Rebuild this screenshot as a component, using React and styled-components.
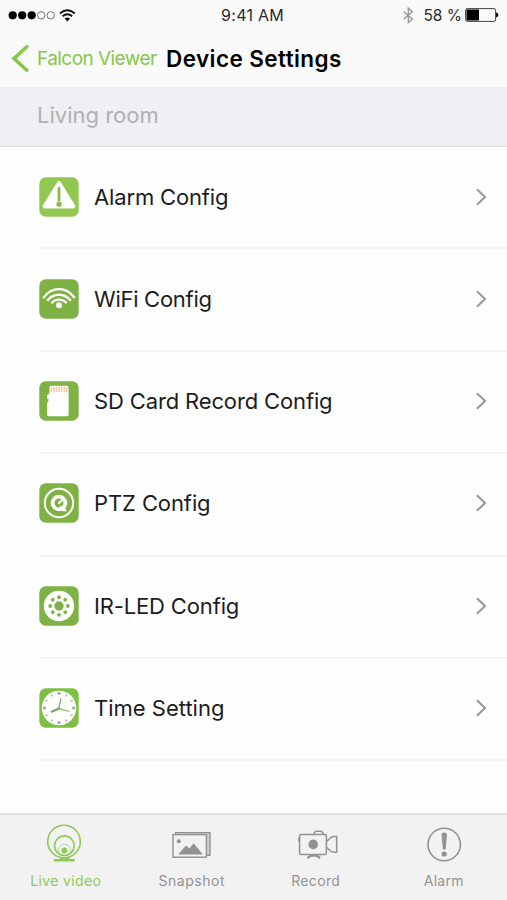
import styled, { createGlobalStyle } from "styled-components";

const GlobalStyles = createGlobalStyle`
  * {
    box-sizing: border-box;
  }

  body {
    margin: 0;
    background: #fefefe;
    font-family: Inter, "Liberation Sans", sans-serif;
  }

  svg {
    display: block;
    flex-shrink: 0;
  }
`;

const Screen = styled.div`
  width: 100%;
  height: 100vh;
  display: flex;
  flex-direction: column;
  overflow: hidden;
`;

const StatusBar = styled.div`
  height: 30px;
  display: grid;
  grid-template-columns: 1fr auto 1fr;
  align-items: center;
  padding: 0 8px 0 8px;
  background: #fafafa;
  color: #2b2b2b;
  font-size: 16px;
`;

const StatusLeft = styled.div`
  display: flex;
  align-items: center;
  gap: 3px;
`;

const StatusTime = styled.div`
  padding-right: 2px;
  letter-spacing: 0.25px;
`;

const StatusRight = styled.div`
  display: flex;
  align-items: center;
  justify-content: flex-end;
`;

const BatteryText = styled.span`
  margin: 0 3px 0 9px;
  font-size: 15.5px;
  white-space: nowrap;
`;

const NavBar = styled.div`
  height: 57px;
  display: flex;
  align-items: center;
  padding-left: 11px;
  background: #fafafa;
  white-space: nowrap;
`;

const BackText = styled.div`
  width: 128px;
  padding-left: 7px;
  color: #86c64c;
  font-size: 19px;
  letter-spacing: -0.55px;
`;

const NavTitle = styled.div`
  padding-left: 8px;
  color: #000;
  font-size: 22.5px;
  font-weight: 600;
  letter-spacing: 0.42px;
`;

const SectionHeader = styled.div`
  height: 60px;
  display: flex;
  align-items: center;
  padding: 0 0 3px 37px;
  background: #efeff4;
  border-bottom: 1px solid #dcdce0;
  color: #b0b0b3;
  font-size: 22px;
`;

const List = styled.div`
  flex: 1;
  padding-left: 39px;
`;

const Row = styled.div`
  height: 102.4px;
  display: flex;
  align-items: center;
  padding: 0 20px 2px 0;
  border-bottom: 2px solid #f3f3f3;

  &:first-child {
    padding-bottom: 0;
  }
`;

const RowText = styled.div`
  flex: 1;
  padding-left: 15px;
  color: #1c1c1c;
  font-size: 22px;
  letter-spacing: ${(props) => props.$spacing}px;
`;

const TabBar = styled.div`
  height: 87px;
  display: grid;
  grid-template-columns: repeat(4, 1fr);
  padding-left: 1px;
  background: #f2f2f2;
  border-top: 2px solid #e3e3e3;
`;

const Tab = styled.div`
  display: flex;
  flex-direction: column;
  align-items: center;
  padding-top: 8px;
  color: ${(props) => (props.$active ? "#8fca56" : "#929292")};
`;

const TabText = styled.div`
  margin-top: 5px;
  padding-left: ${(props) => props.$left || 0}px;
  padding-right: ${(props) => props.$right || 0}px;
  font-size: 14px;
  line-height: 18px;
  letter-spacing: ${(props) => props.$spacing}px;
  white-space: nowrap;
`;

function Signal() {
  return (
    <svg width="48" height="10" viewBox="0 0 48 10">
      {[4.7, 14.2, 23.7].map((x) => (
        <circle key={x} cx={x} cy="5.3" r="4.1" fill="#000" />
      ))}
      {[33.2, 42.7].map((x) => (
        <circle key={x} cx={x} cy="5.3" r="3.7" fill="none" stroke="#555" strokeWidth="0.8" />
      ))}
    </svg>
  );
}

function StatusWifi() {
  return (
    <svg width="17" height="13" viewBox="0 0 17 13">
      <g fill="none" stroke="#111" strokeWidth="2">
        <path d="M1 4.4Q8.3-1.8 15.8 4.4" />
        <path d="M3.6 7.2Q8.3 3.2 13.2 7.2" />
      </g>
      <path d="M5.6 9.5Q8.3 7.6 11.1 9.5L8.4 12.5Z" fill="#111" />
    </svg>
  );
}

function Bluetooth() {
  return (
    <svg width="12" height="17" viewBox="0 0 12 17">
      <path
        d="M1.5 4.5L10.3 12 6.3 15.6V1.2L10.3 4.8 1.5 12.3"
        fill="none"
        stroke="#999"
        strokeWidth="1.4"
      />
    </svg>
  );
}

function Battery() {
  return (
    <svg width="34" height="14" viewBox="0 0 34 14">
      <rect x="0.6" y="0.6" width="30" height="12.8" rx="1.5" fill="none" stroke="#444" />
      <rect x="1.5" y="1.5" width="12.5" height="11" fill="#000" />
      <path d="M31 4.6Q33.5 5 33.5 7T31 9.4Z" fill="#111" />
    </svg>
  );
}

function BackArrow() {
  return (
    <svg width="19" height="29" viewBox="0 0 19 29">
      <path d="M16.9 1.7L3 14.6 16.9 27.3" fill="none" stroke="#86c64c" strokeWidth="3.5" />
    </svg>
  );
}

function Chevron() {
  return (
    <svg width="12" height="18" viewBox="0 0 12 18">
      <path d="M1.9 1.2L10 9 1.9 16.8" fill="none" stroke="#999" strokeWidth="2.1" />
    </svg>
  );
}

function RowIcon({ color, children }) {
  return (
    <svg width="40" height="40" viewBox="0 0 40 40">
      <rect x="0.3" y="0.3" width="39.4" height="39.4" rx="6.5" fill={color} />
      {children}
    </svg>
  );
}

const alarmIcon = (
  <RowIcon color="#92c84f">
    <path
      d="M20 6L34.4 29.4H5.6Z"
      fill="#fff"
      stroke="#fff"
      strokeWidth="4"
      strokeLinejoin="round"
    />
    <path d="M20 11.4V23" stroke="#86ba4a" strokeWidth="2.8" strokeLinecap="round" />
    <circle cx="20" cy="27.2" r="2.6" fill="#86ba4a" />
  </RowIcon>
);

const wifiIcon = (
  <RowIcon color="#7eb245">
    <g fill="none" stroke="#fff" strokeWidth="2.4">
      <path d="M4.2 19C13 7.2 27 7.2 35.8 19" />
      <path d="M8.2 21.8C14.6 13.8 25.4 13.8 31.8 21.8" />
      <path d="M12.4 24.2C16.4 19.4 23.6 19.4 27.6 24.2" />
    </g>
    <circle cx="20" cy="26.2" r="3" fill="#fff" />
  </RowIcon>
);

const sdCardIcon = (
  <RowIcon color="#7eb245">
    <path
      d="M12 4.8H28Q29.6 4.8 29.6 6.5V33.5Q29.6 35.2 28 35.2H9.8Q8 35.2 8 33.5V22.5Q8 21 9.5 20.2V18H8V14.5L10.5 12.3V6.2Q10.5 4.8 12 4.8Z"
      fill="#fff"
    />
    <g fill="#f5d0a8">
      {[11.5, 14.1, 16.7, 19.3, 21.9, 24.5, 27.1].map((x) => (
        <rect key={x} x={x} y="5.6" width="1.7" height="5.6" />
      ))}
    </g>
  </RowIcon>
);

const ptzIcon = (
  <RowIcon color="#7eb245">
    <circle cx="20" cy="20" r="14.2" fill="none" stroke="#fff" strokeWidth="2" />
    <circle cx="20" cy="20" r="6.4" fill="none" stroke="#fff" strokeWidth="3.8" />
    <path d="M20.8 22.5L25.5 24 27.6 28.2H23.2Z" fill="#fff" />
    <path d="M19.4 20.8L23.4 16.6" stroke="#fff" strokeWidth="2" />
  </RowIcon>
);

const irLedIcon = (
  <RowIcon color="#7eb245">
    <circle cx="20" cy="20" r="15.2" fill="#fff" />
    <circle cx="20" cy="20" r="4.7" fill="#7eb245" />
    {[0, 45, 90, 135, 180, 225, 270, 315].map((angle) => (
      <circle
        key={angle}
        cx="20"
        cy="11.2"
        r="1.9"
        fill="#7eb245"
        transform={`rotate(${angle} 20 20)`}
      />
    ))}
  </RowIcon>
);

const clockIcon = (
  <RowIcon color="#7fc043">
    <circle cx="20" cy="20" r="17.2" fill="#fdfefc" />
    {[0, 30, 60, 90, 120, 150, 180, 210, 240, 270, 300, 330].map((angle) => (
      <path
        key={angle}
        d="M20 4.2V6.6"
        stroke={angle % 90 === 0 ? "#8f9b8a" : "#b4beae"}
        strokeWidth={angle % 90 === 0 ? 2.6 : 1.6}
        transform={`rotate(${angle} 20 20)`}
      />
    ))}
    <path d="M19.5 21.5L22 10.5" stroke="#8fae7c" strokeWidth="1.3" />
    <path d="M20 20.5L12 24" stroke="#7aa065" strokeWidth="2" />
    <path d="M19 20.3L30.5 23.5" stroke="#8fae7c" strokeWidth="1.2" />
    <circle cx="20" cy="20.7" r="1.4" fill="#7fc043" />
  </RowIcon>
);

function LiveVideoIcon() {
  return (
    <svg width="42" height="44" viewBox="0 0 42 44">
      <g fill="none" stroke="currentColor" strokeWidth="1.6">
        <circle cx="21" cy="18.5" r="16.3" />
        <circle cx="21.4" cy="22.7" r="9.8" />
        <path d="M16.5 31A6.2 6.2 0 1 1 26.5 31" strokeWidth="0.9" opacity="0.6" />
      </g>
      <circle cx="21.4" cy="27.5" r="2.9" fill="currentColor" />
      <path d="M15 33.8Q21 35.5 28 33.8L25 36.2H18Z" fill="currentColor" />
      <rect x="10.6" y="36" width="21.3" height="2.6" rx="1.2" fill="currentColor" />
    </svg>
  );
}

function SnapshotIcon() {
  return (
    <svg width="42" height="44" viewBox="0 0 42 44">
      <g fill="none" stroke="currentColor" strokeWidth="1.4">
        <path d="M5.5 11.6V9.6H40V32.2H36.6" fill="#d0d0d0" />
        <rect x="3" y="11.6" width="33.4" height="22.6" fill="#f2f2f2" />
      </g>
      <circle cx="8.8" cy="18.2" r="2" fill="currentColor" />
      <path d="M8.2 31.5L16 22.5 19.3 25.6 23.7 20.2 32.8 31.5Z" fill="currentColor" />
    </svg>
  );
}

function RecordIcon() {
  return (
    <svg width="42" height="44" viewBox="-1 0 42 44">
      <g fill="none" stroke="currentColor" strokeWidth="1.5">
        <rect x="2.6" y="11.6" width="26.8" height="20" rx="1.5" />
        <path d="M29.4 18.6L33.5 14.8Q35 13.6 37.5 13.6H39.7V29.2H37Q35 29.2 33.5 27.8L29.4 24.2" />
        <path d="M17.2 11.4V9.8L18.9 8.2H24.3L26 9.8V11.4" />
      </g>
      <circle cx="16.2" cy="21.4" r="4.8" fill="currentColor" />
      <path d="M2.8 13.8Q0.8 14.6 1 18.6H2.8Z" fill="currentColor" />
      <path
        d="M10.5 35L14 32.6H19.5L23 35"
        fill="none"
        stroke="currentColor"
        strokeWidth="2.4"
      />
    </svg>
  );
}

function AlarmIcon() {
  return (
    <svg width="42" height="44" viewBox="0 0 42 44">
      <circle cx="21.2" cy="21.5" r="16.2" fill="none" stroke="currentColor" strokeWidth="1.6" />
      <path
        d="M18.5 11.5Q18.5 9.6 21.2 9.6T24 11.5L22.6 26.6H19.9Z"
        fill="currentColor"
      />
      <circle cx="21.2" cy="31" r="2.6" fill="currentColor" />
    </svg>
  );
}

const rows = [
  { text: "Alarm Config", icon: alarmIcon, spacing: -0.15 },
  { text: "WiFi Config", icon: wifiIcon, spacing: -0.28 },
  { text: "SD Card Record Config", icon: sdCardIcon, spacing: -0.14 },
  { text: "PTZ Config", icon: ptzIcon, spacing: -0.1 },
  { text: "IR-LED Config", icon: irLedIcon, spacing: -0.15 },
  { text: "Time Setting", icon: clockIcon, spacing: 0 },
];

const tabs = [
  { text: "Live video", icon: <LiveVideoIcon />, active: true, spacing: 0.35, left: 3 },
  { text: "Snapshot", icon: <SnapshotIcon />, spacing: 0.55, left: 2 },
  { text: "Record", icon: <RecordIcon />, spacing: 0.35, right: 3 },
  { text: "Alarm", icon: <AlarmIcon />, spacing: 0.25 },
];

function App() {
  return (
    <>
      <GlobalStyles />
      <Screen>
        <StatusBar>
          <StatusLeft>
            <Signal />
            <StatusWifi />
          </StatusLeft>
          <StatusTime>9:41 AM</StatusTime>
          <StatusRight>
            <Bluetooth />
            <BatteryText>58 %</BatteryText>
            <Battery />
          </StatusRight>
        </StatusBar>

        <NavBar>
          <BackArrow />
          <BackText>Falcon Viewer</BackText>
          <NavTitle>Device Settings</NavTitle>
        </NavBar>

        <SectionHeader>Living room</SectionHeader>

        <List>
          {rows.map((row) => (
            <Row key={row.text}>
              {row.icon}
              <RowText $spacing={row.spacing}>{row.text}</RowText>
              <Chevron />
            </Row>
          ))}
        </List>

        <TabBar>
          {tabs.map((tab) => (
            <Tab key={tab.text} $active={tab.active}>
              {tab.icon}
              <TabText $spacing={tab.spacing} $left={tab.left} $right={tab.right}>
                {tab.text}
              </TabText>
            </Tab>
          ))}
        </TabBar>
      </Screen>
    </>
  );
}

export default App;
